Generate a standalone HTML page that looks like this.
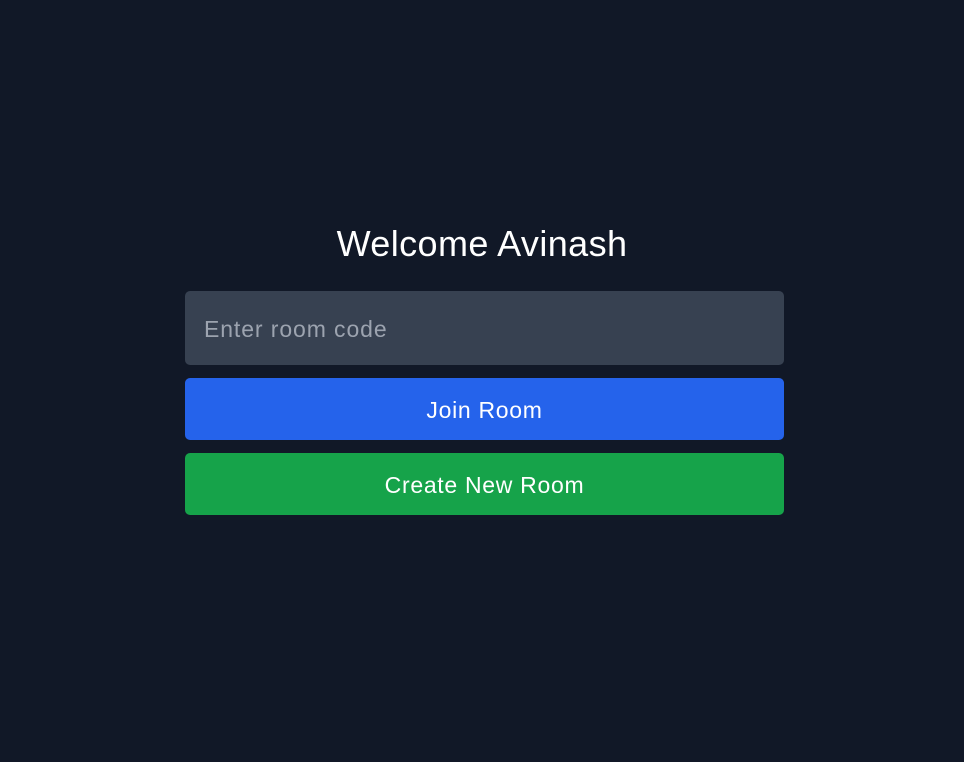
<!DOCTYPE html>
<html><head><style>
html,body{margin:0;padding:0;background:#111827;width:964px;height:762px;overflow:hidden;font-family:"Liberation Sans",sans-serif;}
h1{position:absolute;top:222px;left:0;width:964px;text-align:center;margin:0;font-weight:400;font-size:36px;color:#fff;line-height:44px;letter-spacing:0.4px;}
.in{position:absolute;left:185px;top:291px;width:599px;height:74px;background:#374151;border-radius:5px;color:#9ca3af;font-size:23px;line-height:76px;box-sizing:border-box;padding-left:19px;letter-spacing:0.9px;}
.b{position:absolute;left:185px;width:599px;height:62px;border-radius:5px;color:#fff;font-size:23px;line-height:64px;text-align:center;letter-spacing:0.7px;}
</style></head><body>
<h1>Welcome Avinash</h1>
<div class="in">Enter room code</div>
<div class="b" style="top:378px;background:#2563eb">Join Room</div>
<div class="b" style="top:453px;background:#16a34a">Create New Room</div>
</body></html>
